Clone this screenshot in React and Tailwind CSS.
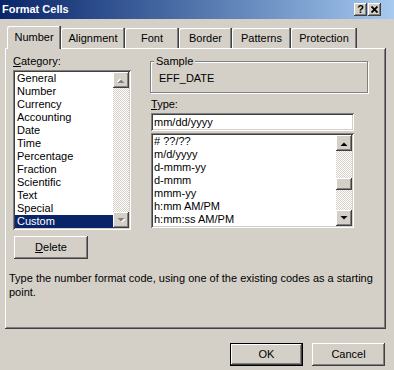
import React from "react";

const raised =
  "shadow-[inset_-1px_-1px_#404040,inset_1px_1px_#ffffff,inset_-2px_-2px_#808080,inset_2px_2px_#d4d0c8]";
const sunken =
  "shadow-[inset_1px_1px_#808080,inset_-1px_-1px_#ffffff,inset_2px_2px_#404040,inset_-2px_-2px_#d4d0c8]";
const dither =
  "bg-[image:repeating-conic-gradient(#d4d0c8_0_25%,#ffffff_0_50%)] bg-[length:2px_2px]";

const tabs = [
  { label: "Number", w: "w-[54px]", active: true },
  { label: "Alignment", w: "w-[64px]" },
  { label: "Font", w: "w-[54px]" },
  { label: "Border", w: "w-[53px]" },
  { label: "Patterns", w: "w-[59px]" },
  { label: "Protection", w: "w-[66px]" },
];

const categories = [
  "General",
  "Number",
  "Currency",
  "Accounting",
  "Date",
  "Time",
  "Percentage",
  "Fraction",
  "Scientific",
  "Text",
  "Special",
  "Custom",
];

const types = [
  "# ??/??",
  "m/d/yyyy",
  "d-mmm-yy",
  "d-mmm",
  "mmm-yy",
  "h:mm AM/PM",
  "h:mm:ss AM/PM",
];

function Arrow({ down, disabled }) {
  return (
    <div className={`w-[16px] h-[16px] bg-[#d4d0c8] flex items-center justify-center ${raised}`}>
      <svg width="8" height="5" viewBox="0 0 8 5" className={down ? "" : "rotate-180"}>
        {disabled && <polygon points="1.5,1 8.5,1 5,4.5" fill="#ffffff" />}
        <polygon points="0.5,0 7.5,0 4,3.5" fill={disabled ? "#808080" : "#000000"} />
      </svg>
    </div>
  );
}

function Button({ children, isDefault, className = "" }) {
  if (isDefault) {
    return (
      <div className={`border border-black ${className}`}>
        <div className={`w-full h-full bg-[#d4d0c8] flex items-center justify-center ${raised}`}>
          {children}
        </div>
      </div>
    );
  }
  return (
    <div className={`bg-[#d4d0c8] flex items-center justify-center ${raised} ${className}`}>
      {children}
    </div>
  );
}

export default function App() {
  return (
    <div className="w-[394px] h-[370px] overflow-hidden bg-[#d4d0c8] text-black text-[11px] leading-[13px] font-['Liberation_Sans',Arial,sans-serif]">
      {/* title bar */}
      <div className="h-[19px] flex items-center bg-linear-to-r from-[#0a246a] to-[#a6caf0] pl-[2px] pr-[13px]">
        <span className="text-white font-bold text-[11px] flex-1">Format Cells</span>
        <div className={`w-[13px] h-[13px] bg-[#d4d0c8] flex items-center justify-center font-bold text-[11px] leading-none mr-px ${raised}`}>
          ?
        </div>
        <div className={`w-[13px] h-[13px] bg-[#d4d0c8] flex items-center justify-center ${raised}`}>
          <svg width="7" height="7" viewBox="0 0 7 7">
            <path d="M0.5 0.5 L6.5 6.5 M6.5 0.5 L0.5 6.5" stroke="#000" strokeWidth="1.8" />
          </svg>
        </div>
      </div>

      {/* tabs */}
      <div className="flex items-end h-[22px] mt-[7px] pl-[7px]">
        {tabs.map((t) =>
          t.active ? (
            <div
              key={t.label}
              className={`${t.w} h-[23px] -mb-px relative z-10 bg-[#d4d0c8] flex items-start justify-center pt-[5px] rounded-tl-[2px] shadow-[inset_-1px_0_#404040,inset_-2px_0_#808080,inset_1px_1px_#ffffff]`}
            >
              {t.label}
            </div>
          ) : (
            <div
              key={t.label}
              className={`${t.w} h-[20px] bg-[#d4d0c8] flex items-start justify-center pt-[4px] rounded-tl-[2px] shadow-[inset_-1px_0_#404040,inset_-2px_0_#808080,inset_1px_1px_#ffffff]`}
            >
              {t.label}
            </div>
          )
        )}
      </div>

      {/* panel */}
      <div className={`ml-[5px] w-[381px] h-[281px] pl-[4px] pt-[7px] ${raised}`}>
        <div className="flex pl-[4px]">
          {/* left column */}
          <div className="w-[118px] flex flex-col">
            <div className="h-[13px]">
              <span className="underline">C</span>ategory:
            </div>
            <div className={`mt-[2px] h-[160px] bg-white p-[2px] flex ${sunken}`}>
              <div className="flex-1 flex flex-col">
                {categories.map((c) => (
                  <div
                    key={c}
                    className={`h-[13px] pl-[2px] ${c === "Custom" ? "bg-[#0a246a] text-white" : ""}`}
                  >
                    {c}
                  </div>
                ))}
              </div>
              <div className="w-[16px] flex flex-col">
                <Arrow disabled />
                <div className={`flex-1 ${dither}`} />
                <Arrow down disabled />
              </div>
            </div>
            <Button className="mt-[6px] ml-px w-[74px] h-[23px]">
              <span>
                <span className="underline">D</span>elete
              </span>
            </Button>
          </div>

          {/* right column */}
          <div className="ml-[19px] flex flex-col">
            <div className="relative mt-[6px] w-[218px] h-[32px] border border-[#808080] shadow-[1px_1px_#ffffff,inset_1px_1px_#ffffff] pl-[8px] pt-[10px]">
              <span className="absolute left-[3px] -top-[7px] px-[2px] bg-[#d4d0c8]">Sample</span>
              EFF_DATE
            </div>
            <div className="mt-[5px] ml-px h-[13px]">
              <span className="underline">T</span>ype:
            </div>
            <div className={`mt-[2px] ml-px w-[203px] h-[18px] bg-white pl-[3px] pt-[3px] ${sunken}`}>
              mm/dd/yyyy
            </div>
            <div className={`mt-[2px] ml-px w-[203px] h-[95px] bg-white p-[2px] flex ${sunken}`}>
              <div className="flex-1 flex flex-col">
                {types.map((t) => (
                  <div key={t} className="h-[13px] pl-[1px]">
                    {t}
                  </div>
                ))}
              </div>
              <div className="w-[16px] flex flex-col">
                <Arrow />
                <div className={`flex-1 flex flex-col ${dither}`}>
                  <div className={`mt-[27px] h-[12px] bg-[#d4d0c8] ${raised}`} />
                </div>
                <Arrow down />
              </div>
            </div>
          </div>
        </div>

        <p className="mt-[12px] w-[372px] leading-[14px]">
          Type the number format code, using one of the existing codes as a starting point.
        </p>
      </div>

      {/* bottom buttons */}
      <div className="mt-[14px] flex justify-end gap-[9px] pr-[9px]">
        <Button isDefault className="w-[73px] h-[23px]">
          OK
        </Button>
        <Button className="w-[73px] h-[23px]">Cancel</Button>
      </div>
    </div>
  );
}
